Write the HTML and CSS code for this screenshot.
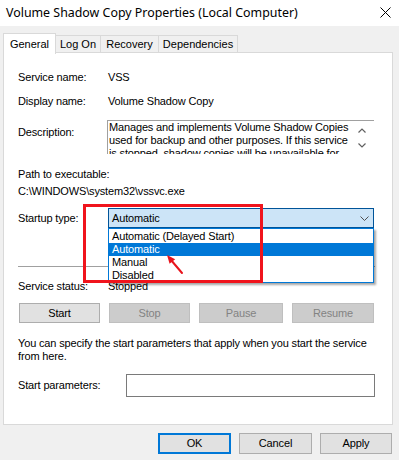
FILE: index.html
```html
<!DOCTYPE html>
<html>
<head>
<meta charset="utf-8">
<link rel="stylesheet" href="styles.css">
</head>
<body>
<div class="titlebar">
  <span class="title">Volume Shadow Copy Properties (Local Computer)</span>
  <svg class="close" width="11" height="11" viewBox="0 0 11 11"><path d="M0.5 0.5L10.5 10.5M10.5 0.5L0.5 10.5" stroke="#000" stroke-width="1"/></svg>
</div>
<div class="tabs">
  <div class="tab active">General</div>
  <div class="tab t-logon">Log On</div>
  <div class="tab t-recovery">Recovery</div>
  <div class="tab t-deps">Dependencies</div>
</div>
<div class="panel">
  <div class="row r-service"><span class="label">Service name:</span><span>VSS</span></div>
  <div class="row r-display"><span class="label">Display name:</span><span>Volume Shadow Copy</span></div>
  <div class="row r-desc">
    <span class="label desc-label">Description:</span>
    <div class="descbox">
      <div class="desctext">Manages and implements Volume Shadow Copies<br>used for backup and other purposes. If this service<br>is stopped, shadow copies will be unavailable for</div>
      <svg class="sarrow up" width="8" height="5" viewBox="0 0 8 5"><path d="M0.5 4.5L4 1L7.5 4.5" fill="none" stroke="#606060" stroke-width="1.2"/></svg>
      <svg class="sarrow down" width="8" height="5" viewBox="0 0 8 5"><path d="M0.5 0.5L4 4L7.5 0.5" fill="none" stroke="#606060" stroke-width="1.2"/></svg>
    </div>
  </div>
  <div class="line r-pathlabel">Path to executable:</div>
  <div class="line r-path">C:\WINDOWS\system32\vssvc.exe</div>
  <div class="row r-startup">
    <span class="label startup-label">Startup type:</span>
    <div class="combo">
      <span class="combo-text">Automatic</span>
      <svg class="chev" width="9" height="5" viewBox="0 0 9 5"><path d="M0.5 0.5L4.5 4.5L8.5 0.5" fill="none" stroke="#505050" stroke-width="1"/></svg>
      <div class="droplist">
        <div class="item">Automatic (Delayed Start)</div>
        <div class="item selected">Automatic</div>
        <div class="item">Manual</div>
        <div class="item">Disabled</div>
      </div>
    </div>
  </div>
  <div class="separator"></div>
  <div class="row r-status"><span class="label">Service status:</span><span>Stopped</span></div>
  <div class="buttons">
    <div class="btn b-start">Start</div>
    <div class="btn disabled b-stop">Stop</div>
    <div class="btn disabled b-pause">Pause</div>
    <div class="btn disabled b-resume">Resume</div>
  </div>
  <div class="info">You can specify the start parameters that apply when you start the service<br>from here.</div>
  <div class="row r-params"><span class="label params-label">Start parameters:</span><div class="input"></div></div>
  <div class="redbox"></div>
  <svg class="redarrow" width="30" height="30" viewBox="0 0 30 30">
    <path d="M9 9L20 22" stroke="#e8141c" stroke-width="2" stroke-linecap="round"/>
    <path d="M5 4L13.2 8.2L7.6 12.8Z" fill="#e8141c"/>
  </svg>
</div>
<div class="footer">
  <div class="fbtn ok">OK</div>
  <div class="fbtn cancel">Cancel</div>
  <div class="fbtn apply">Apply</div>
</div>
</body>
</html>
```
FILE: styles.css
```css
html, body {
  margin: 0;
  padding: 0;
}
body {
  width: 399px;
  height: 460px;
  overflow: hidden;
  background: #f0f0f0;
  font-family: "Liberation Sans", Arial, sans-serif;
  font-size: 11px;
  letter-spacing: -0.15px;
  color: #000;
}
.titlebar {
  height: 26px;
  background: #fff;
  display: flex;
  align-items: center;
  padding-left: 6px;
  position: relative;
}
.title {
  font-family: "Noto Sans", "Liberation Sans", sans-serif;
  font-size: 12.4px;
  letter-spacing: 0;
  line-height: 26px;
  margin-top: -1px;
}
.close {
  position: absolute;
  left: 380px;
  top: 7px;
}
.tabs {
  margin-top: 7px;
  height: 19px;
  padding-left: 3px;
  display: flex;
  align-items: flex-start;
}
.tab {
  box-sizing: border-box;
  height: 17px;
  margin-top: 2px;
  border: 1px solid #d9d9d9;
  border-bottom: none;
  background: #f0f0f0;
  line-height: 16px;
  text-align: center;
  margin-left: -1px;
  letter-spacing: 0;
}
.tab.active {
  height: 21px;
  margin-top: 0;
  margin-left: 0;
  background: #fff;
  position: relative;
  z-index: 2;
  width: 53px;
  line-height: 20px;
}
.t-logon { width: 46px; }
.t-recovery { width: 59px; }
.t-deps { width: 80px; }
.panel {
  position: relative;
  margin: 0 6px 0 3px;
  border: 1px solid #d9d9d9;
  background: #fff;
  padding: 18px 17px 27px 14px;
}
.row {
  display: flex;
  line-height: 13px;
  white-space: nowrap;
}
.line {
  line-height: 13px;
  white-space: nowrap;
}
.label {
  width: 90px;
  flex: none;
}
.r-display { margin-top: 11px; }
.r-desc { margin-top: 12px; height: 34px; }
.desc-label { padding-top: 6px; width: 89px; }
.descbox {
  position: relative;
  box-sizing: border-box;
  width: 267px;
  height: 34px;
  border-top: 1px solid #a0a0a0;
  border-left: 1px solid #a0a0a0;
  overflow: hidden;
  background: #fff;
}
.desctext {
  padding-left: 1px;
  line-height: 13px;
  white-space: nowrap;
}
.sarrow {
  position: absolute;
  left: 250px;
}
.sarrow.up { top: 7px; }
.sarrow.down { top: 22px; }
.r-pathlabel { margin-top: 14px; }
.r-path { margin-top: 4px; }
.r-startup { margin-top: 10px; height: 20px; }
.startup-label { line-height: 20px; }
.combo {
  position: relative;
  box-sizing: border-box;
  width: 266px;
  height: 20px;
  border: 1px solid #005499;
  background: #cce4f7;
}
.combo-text {
  display: block;
  padding-left: 3px;
  line-height: 18px;
}
.chev {
  position: absolute;
  right: 4px;
  top: 7px;
}
.droplist {
  position: absolute;
  left: -1px;
  top: 19px;
  box-sizing: border-box;
  width: 266px;
  border: 1px solid #0078d7;
  background: #fff;
  padding: 1px 0 0 0;
  box-shadow: 2px 2px 2px rgba(0, 0, 0, 0.35);
  z-index: 3;
}
.item {
  height: 13px;
  line-height: 13px;
  padding-left: 3px;
}
.item.selected {
  background: #0078d7;
  color: #fff;
}
.separator {
  margin-top: 38px;
  height: 1px;
  background: #a0a0a0;
}
.r-status { margin-top: 13px; }
.buttons {
  margin-top: 10px;
  display: flex;
  gap: 9px;
  padding-left: 1px;
}
.btn {
  box-sizing: border-box;
  height: 20px;
  width: 81px;
  border: 1px solid #adadad;
  background: #e1e1e1;
  text-align: center;
  line-height: 18px;
}
.btn.disabled {
  background: #cccccc;
  border-color: #bfbfbf;
  color: #838383;
}
.b-pause { width: 84px; }
.b-resume { width: 82px; }
.info {
  margin-top: 14px;
  line-height: 13px;
  white-space: nowrap;
}
.r-params { margin-top: 11px; height: 23px; }
.params-label { width: 108px; line-height: 23px; }
.input {
  box-sizing: border-box;
  width: 249px;
  height: 23px;
  border: 1px solid #7a7a7a;
  background: #fff;
}
.redbox {
  position: absolute;
  left: 79px;
  top: 151px;
  width: 180px;
  height: 79px;
  box-sizing: border-box;
  border: 3px solid #f0141c;
  z-index: 4;
}
.redarrow {
  position: absolute;
  left: 158px;
  top: 198px;
  z-index: 5;
}
.footer {
  margin-top: 8px;
  display: flex;
  justify-content: flex-end;
  gap: 8px;
  padding-right: 7px;
}
.fbtn {
  box-sizing: border-box;
  height: 21px;
  width: 73px;
  border: 1px solid #adadad;
  background: #e1e1e1;
  text-align: center;
  line-height: 19px;
}
.fbtn.ok {
  border: 2px solid #0078d7;
  line-height: 17px;
}
.fbtn.apply { width: 72px; }
```
